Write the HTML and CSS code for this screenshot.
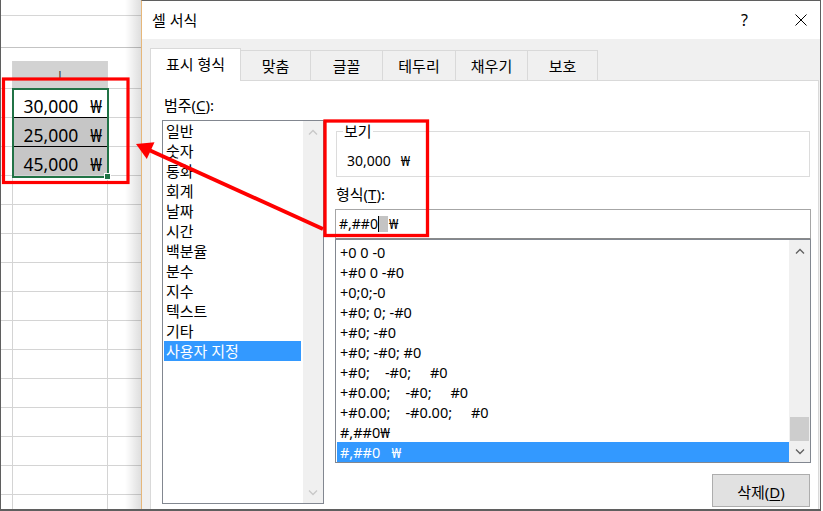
FILE: index.html
```html
<!DOCTYPE html>
<html lang="ko">
<head>
<meta charset="utf-8">
<title>셀 서식</title>
<link rel="stylesheet" href="styles.css">
</head>
<body>
<div class="screen">
  <div class="sheet">
    <div class="sheet-top"></div>
    <div class="sheet-fbar"></div>
    <div class="sheet-gap"></div>
    <div class="row head"><div class="c c1"></div><div class="c c2 hsel">I</div><div class="c c3"></div></div>
    <div class="row"><div class="c c1"></div><div class="c c2 val sep"><span>30,000</span><span class="won">₩</span></div><div class="c c3"></div></div>
    <div class="row"><div class="c c1"></div><div class="c c2 val gray sep"><span>25,000</span><span class="won">₩</span></div><div class="c c3"></div></div>
    <div class="row"><div class="c c1"></div><div class="c c2 val gray"><span>45,000</span><span class="won">₩</span></div><div class="c c3"></div></div>
    <div class="row"><div class="c c1"></div><div class="c c2"></div><div class="c c3"></div></div>
    <div class="row"><div class="c c1"></div><div class="c c2"></div><div class="c c3"></div></div>
    <div class="row"><div class="c c1"></div><div class="c c2"></div><div class="c c3"></div></div>
    <div class="row"><div class="c c1"></div><div class="c c2"></div><div class="c c3"></div></div>
    <div class="row"><div class="c c1"></div><div class="c c2"></div><div class="c c3"></div></div>
    <div class="row"><div class="c c1"></div><div class="c c2"></div><div class="c c3"></div></div>
    <div class="row"><div class="c c1"></div><div class="c c2"></div><div class="c c3"></div></div>
    <div class="row"><div class="c c1"></div><div class="c c2"></div><div class="c c3"></div></div>
    <div class="row"><div class="c c1"></div><div class="c c2"></div><div class="c c3"></div></div>
    <div class="row"><div class="c c1"></div><div class="c c2"></div><div class="c c3"></div></div>
    <div class="row"><div class="c c1"></div><div class="c c2"></div><div class="c c3"></div></div>
    <div class="row"><div class="c c1"></div><div class="c c2"></div><div class="c c3"></div></div>
    <div class="sel-box"><span class="handle"></span></div>
    <div class="shadow"></div>
  </div>

  <div class="dialog">
    <div class="titlebar">
      <span class="title">셀 서식</span>
      <span class="help">?</span>
      <svg class="close" width="12" height="12" viewBox="0 0 12 12"><path d="M0.5 0.5 L11.5 11.5 M11.5 0.5 L0.5 11.5" stroke="#000" stroke-width="1" fill="none"/></svg>
    </div>
    <div class="dbody">
      <div class="tabs">
        <div class="tab active t1">표시 형식</div>
        <div class="tab t2">맞춤</div>
        <div class="tab t3">글꼴</div>
        <div class="tab t4">테두리</div>
        <div class="tab t5">채우기</div>
        <div class="tab t6">보호</div>
      </div>
      <div class="panel">
        <div class="col-left">
          <div class="lbl">범주(<u>C</u>):</div>
          <div class="listbox cat">
            <ul class="items">
              <li>일반</li>
              <li>숫자</li>
              <li>통화</li>
              <li>회계</li>
              <li>날짜</li>
              <li>시간</li>
              <li>백분율</li>
              <li>분수</li>
              <li>지수</li>
              <li>텍스트</li>
              <li>기타</li>
              <li class="on">사용자 지정</li>
            </ul>
            <div class="vscroll off">
              <div class="sb-btn"><svg width="10" height="6" viewBox="0 0 10 6"><polyline points="1,5.5 5,1.5 9,5.5" fill="none" stroke="currentColor" stroke-width="1.3"/></svg></div>
              <div class="sb-track"></div>
              <div class="sb-btn"><svg width="10" height="6" viewBox="0 0 10 6"><polyline points="1,0.5 5,4.5 9,0.5" fill="none" stroke="currentColor" stroke-width="1.3"/></svg></div>
            </div>
          </div>
        </div>
        <div class="col-right">
          <fieldset class="preview">
            <legend>보기</legend>
            <div class="pv"><span>30,000</span><span class="pv-won">₩</span></div>
          </fieldset>
          <div class="lbl lbl2">형식(<u>T</u>):</div>
          <div class="input"><span>#,##0</span><span class="caret"></span><span class="selsp"></span><span class="in-won">₩</span></div>
          <div class="listbox fmt">
            <ul class="items">
              <li>+0 0 -0</li>
              <li>+#0 0 -#0</li>
              <li>+0;0;-0</li>
              <li>+#0; 0; -#0</li>
              <li>+#0; -#0</li>
              <li>+#0; -#0; #0</li>
              <li>+#0;    -#0;     #0</li>
              <li>+#0.00;    -#0;     #0</li>
              <li>+#0.00;    -#0.00;     #0</li>
              <li>#,##0₩</li>
              <li class="on">#,##0   ₩</li>
            </ul>
            <div class="vscroll">
              <div class="sb-btn"><svg width="10" height="6" viewBox="0 0 10 6"><polyline points="1,5.5 5,1.5 9,5.5" fill="none" stroke="currentColor" stroke-width="1.3"/></svg></div>
              <div class="sb-track"><div class="thumb"></div></div>
              <div class="sb-btn"><svg width="10" height="6" viewBox="0 0 10 6"><polyline points="1,0.5 5,4.5 9,0.5" fill="none" stroke="currentColor" stroke-width="1.3"/></svg></div>
            </div>
          </div>
          <div class="btnrow"><button class="btn">삭제(<u>D</u>)</button></div>
        </div>
      </div>
    </div>
  </div>
</div>

<svg class="annot" width="823" height="511" viewBox="0 0 823 511">
  <rect x="3.5" y="79" width="124.5" height="103.5" fill="none" stroke="#ff0000" stroke-width="3.2"/>
  <rect x="325" y="121" width="102.5" height="114.5" fill="none" stroke="#ff0000" stroke-width="3.3"/>
  <line x1="323" y1="229" x2="149" y2="150" stroke="#ff0000" stroke-width="4"/>
  <polygon points="136,144 154.5,142.3 146.8,159" fill="#ff0000"/>
</svg>
</body>
</html>
```

FILE: styles.css
```css
* { box-sizing: border-box; }
html, body { margin: 0; padding: 0; }
body {
  width: 823px;
  height: 511px;
  overflow: hidden;
  position: relative;
  background: #fff;
  color: #000;
  font-family: "Noto Sans", "Noto Sans CJK KR", sans-serif;
}
.screen {
  display: flex;
  width: 821px;
  height: 511px;
  border-bottom: 2px solid #5f5f5f;
}

/* ---------- spreadsheet ---------- */
.sheet {
  width: 141px;
  flex: none;
  border-left: 1px solid #5f5f5f;
  position: relative;
  overflow: hidden;
  display: flex;
  flex-direction: column;
  background: #fff;
}
.sheet-top { height: 16px; flex: none; border-bottom: 1px solid #d6d6d6; }
.sheet-fbar { height: 32px; flex: none; border-bottom: 1px solid #c3c3c3; }
.sheet-gap { height: 13px; flex: none; }
.row {
  display: grid;
  grid-template-columns: 12px 95px 1fr;
  height: 29px;
  flex: none;
  border-bottom: 1px solid #d4d4d4;
}
.row.head { height: 28px; }
.c1, .c2 { border-right: 1px solid #d4d4d4; }
.hsel {
  background: #d2d2d2;
  display: flex;
  justify-content: center;
  align-items: center;
  font-family: "Liberation Sans", sans-serif;
  font-size: 12px;
  color: #444;
  padding-top: 2px;
}
.val {
  display: flex;
  justify-content: flex-end;
  align-items: flex-start;
  padding: 3px 5px 0 0;
  font-size: 17.5px;
  line-height: 28px;
  overflow: hidden;
}
.val .won { margin-left: 12px; }
.gray { background: #c6c6c6; }
.sep { box-shadow: 0 1px 0 #000; }
.sel-box {
  position: absolute;
  left: 11px;
  top: 88px;
  width: 97px;
  height: 90px;
  border: 2px solid #217346;
}
.handle {
  position: absolute;
  right: -4px;
  bottom: -4px;
  width: 7px;
  height: 7px;
  background: #217346;
  border: 1px solid #fff;
}
.shadow {
  position: absolute;
  top: 0;
  right: 0;
  bottom: 0;
  width: 16px;
  background: linear-gradient(to right, rgba(0,0,0,0), rgba(0,0,0,0.13));
}

/* ---------- dialog ---------- */
.dialog {
  width: 680px;
  flex: none;
  border-left: 1px solid #e6b77a;
  border-top: 1px solid #5f5f5f;
  border-right: 1px solid #5f5f5f;
  background: #f0f0f0;
  display: flex;
  flex-direction: column;
}
.titlebar {
  height: 38px;
  flex: none;
  background: #fff;
  display: flex;
  align-items: center;
  padding: 0 13px 0 10px;
}
.title { font-size: 15px; line-height: 20px; }
.help {
  margin-left: auto;
  margin-right: 47px;
  font-size: 16px;
  line-height: 20px;
}
.close { display: block; flex: none; }

.dbody {
  flex: 1;
  min-height: 0;
  padding: 9px 1px 0 8px;
  display: flex;
  flex-direction: column;
}
.tabs {
  height: 32px;
  flex: none;
  display: flex;
  align-items: flex-end;
}
.tab {
  height: 30px;
  margin-left: -1px;
  border: 1px solid #d9d9d9;
  border-bottom: none;
  background: #f0f0f0;
  display: flex;
  align-items: center;
  justify-content: center;
  font-size: 15px;
  line-height: 20px;
}
.tab.active {
  height: 33px;
  margin-left: 0;
  margin-bottom: -1px;
  background: #fff;
  position: relative;
  z-index: 1;
  padding-bottom: 2px;
}
.t1 { width: 91px; }
.t2 { width: 71px; }
.t3 { width: 73px; }
.t4 { width: 74px; }
.t5 { width: 73px; }
.t6 { width: 71px; }

.panel {
  flex: 1;
  min-height: 0;
  overflow: hidden;
  background: #fff;
  border: 1px solid #d9d9d9;
  border-bottom: none;
  display: flex;
  gap: 11px;
  padding: 14px 0 0 11px;
}
.lbl {
  font-size: 15px;
  line-height: 20px;
  height: 20px;
  padding-left: 2px;
}
u { text-decoration: underline; text-underline-offset: 2px; }

.col-left { width: 162px; flex: none; display: flex; flex-direction: column; }
.col-left .listbox { margin-top: 5px; }
.col-right { width: 476px; flex: none; display: flex; flex-direction: column; padding-top: 26px; }

.listbox {
  border: 1px solid #828790;
  background: #fff;
  display: flex;
  overflow: hidden;
}
.cat { height: 384px; }
.items { list-style: none; margin: 0; padding: 0; flex: 1; min-width: 0; overflow: hidden; }
.cat .items li {
  height: 20px;
  line-height: 20px;
  margin: 0 2px 0 1px;
  padding-left: 2px;
  font-size: 15px;
}
.items li.on { background: #3399ff; color: #fff; }

.vscroll {
  width: 20px;
  flex: none;
  background: #f0f0f0;
  display: flex;
  flex-direction: column;
  color: #606060;
}
.vscroll.off { color: #c8c8c8; }
.sb-btn {
  height: 21px;
  flex: none;
  display: flex;
  align-items: center;
  justify-content: center;
}
.sb-btn svg { display: block; }
.sb-track { flex: 1; display: flex; flex-direction: column; justify-content: flex-end; }
.thumb { height: 24px; margin: 0 1px; background: #cdcdcd; }

.preview {
  margin: 0 0 0 1px;
  width: 474px;
  padding: 0 0 5px 6px;
  border: 1px solid #dcdcdc;
}
.preview legend {
  padding: 0 1px;
  font-size: 15px;
  line-height: 20px;
}
.pv {
  padding: 10px 0 0 4px;
  font-size: 14px;
  line-height: 20px;
  display: flex;
}
.pv-won { margin-left: 10px; }

.lbl2 { margin-top: 7px; padding-left: 1px; }
.input {
  margin-top: 5px;
  height: 30px;
  flex: none;
  border: 1px solid #a6a6a6;
  border-bottom-color: #8a8a8a;
  display: flex;
  align-items: center;
  padding-left: 3px;
  font-size: 14px;
  line-height: 20px;
}
.caret { width: 1px; height: 16px; background: #000; }
.selsp { width: 9px; height: 16px; background: #c4c4c4; }
.in-won { margin-left: 1px; }

.fmt { height: 224px; flex: none; }
.fmt .items { padding-top: 2px; }
.fmt .items li {
  height: 20px;
  line-height: 20px;
  margin-left: 1px;
  padding-left: 3px;
  font-size: 14.5px;
  white-space: pre;
}
.fmt .vscroll { width: 21px; }

.btnrow { display: flex; justify-content: flex-end; margin-top: 11px; padding-right: 1px; }
.btn {
  width: 98px;
  height: 33px;
  margin: 0;
  padding: 0;
  background: #e1e1e1;
  border: 1px solid #adadad;
  font-family: "Noto Sans", "Noto Sans CJK KR", sans-serif;
  font-size: 15px;
  line-height: 20px;
  color: #000;
  padding-top: 3px;
}

.annot {
  position: absolute;
  top: 0;
  left: 0;
  pointer-events: none;
}
```
